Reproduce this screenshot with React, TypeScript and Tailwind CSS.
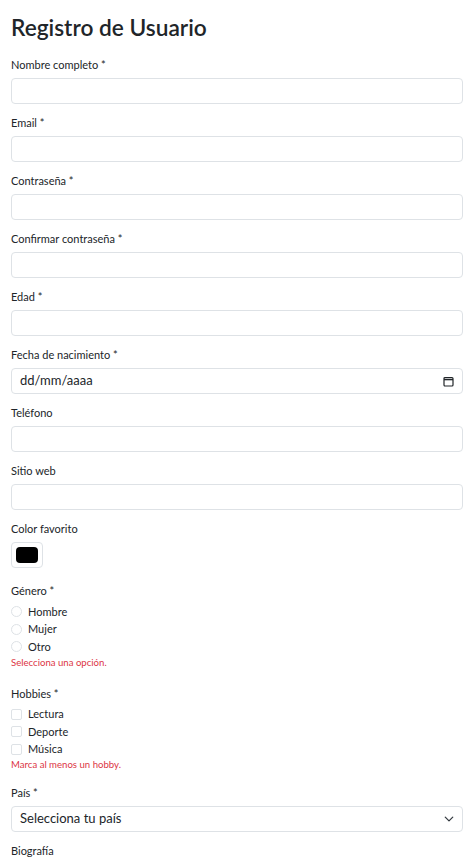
import React from "react";

const font = { fontFamily: 'Lato, "Noto Sans", sans-serif' };

function TextField({ label, required }: { label: string; required?: boolean }) {
  return (
    <div className="mb-[10px]">
      <label className="block text-[11px] leading-[18px] mb-[4px] text-[#212529]">
        {label}
        {required && " *"}
      </label>
      <input
        type="text"
        className="block w-full h-[26px] rounded-[4px] border border-[#dee2e6] bg-white px-[8px] text-[13px] outline-none"
      />
    </div>
  );
}

export default function App() {
  return (
    <div style={font} className="min-h-screen bg-white text-[#212529] pl-[11px] pr-[9px] pt-[13px]">
      <h1 className="text-[22.7px] leading-[30px] font-semibold mb-[13px]">Registro de Usuario</h1>

      <TextField label="Nombre completo" required />
      <TextField label="Email" required />
      <TextField label="Contraseña" required />
      <TextField label="Confirmar contraseña" required />
      <TextField label="Edad" required />

      <div className="mb-[10px]">
        <label className="block text-[11px] leading-[18px] mb-[4px]">Fecha de nacimiento *</label>
        <div className="flex items-center justify-between h-[26px] rounded-[4px] border border-[#dee2e6] px-[8px] text-[13px]">
          <span>dd/mm/aaaa</span>
          <svg width="11" height="11" viewBox="0 0 11 11" fill="none" stroke="#212529" strokeWidth="1.2">
            <rect x="1" y="1.5" width="9" height="8.5" rx="1" />
            <line x1="1" y1="3.5" x2="10" y2="3.5" strokeWidth="1.6" />
          </svg>
        </div>
      </div>

      <TextField label="Teléfono" />
      <TextField label="Sitio web" />

      <div className="mb-[14px]">
        <label className="block text-[11px] leading-[18px] mb-[4px]">Color favorito</label>
        <div className="w-[32px] h-[26px] rounded-[4px] border border-[#dee2e6] p-[4px]">
          <div className="w-full h-full rounded-[4px] bg-black" />
        </div>
      </div>

      <div className="mb-[15px]">
        <div className="text-[11px] leading-[18px] mb-[3px]">Género *</div>
        {["Hombre", "Mujer", "Otro"].map((g) => (
          <label key={g} className="flex items-center gap-[6px] h-[17.5px] text-[11px]">
            <span className="w-[11px] h-[11px] rounded-full border border-[#dee2e6] bg-white" />
            {g}
          </label>
        ))}
        <div className="text-[9.6px] leading-[14px] text-[#dc3545]">Selecciona una opción.</div>
      </div>

      <div className="mb-[12px]">
        <div className="text-[11px] leading-[18px] mb-[3px]">Hobbies *</div>
        {["Lectura", "Deporte", "Música"].map((h) => (
          <label key={h} className="flex items-center gap-[6px] h-[17.5px] text-[11px]">
            <span className="w-[11px] h-[11px] rounded-[2px] border border-[#dee2e6] bg-white" />
            {h}
          </label>
        ))}
        <div className="text-[9.6px] leading-[14px] text-[#dc3545]">Marca al menos un hobby.</div>
      </div>

      <div className="mb-[10px]">
        <label className="block text-[11px] leading-[18px] mb-[4px]">País *</label>
        <div className="flex items-center justify-between h-[26px] rounded-[4px] border border-[#dee2e6] px-[8px] text-[13px]">
          <span>Selecciona tu país</span>
          <svg width="10" height="10" viewBox="0 0 16 16" fill="none" stroke="#343a40" strokeWidth="2" strokeLinecap="round" strokeLinejoin="round">
            <path d="M2 5l6 6 6-6" />
          </svg>
        </div>
      </div>

      <div>
        <label className="block text-[11px] leading-[18px] mb-[4px]">Biografía</label>
        <textarea className="block w-full h-[60px] rounded-[4px] border border-[#dee2e6] outline-none" />
      </div>
    </div>
  );
}
